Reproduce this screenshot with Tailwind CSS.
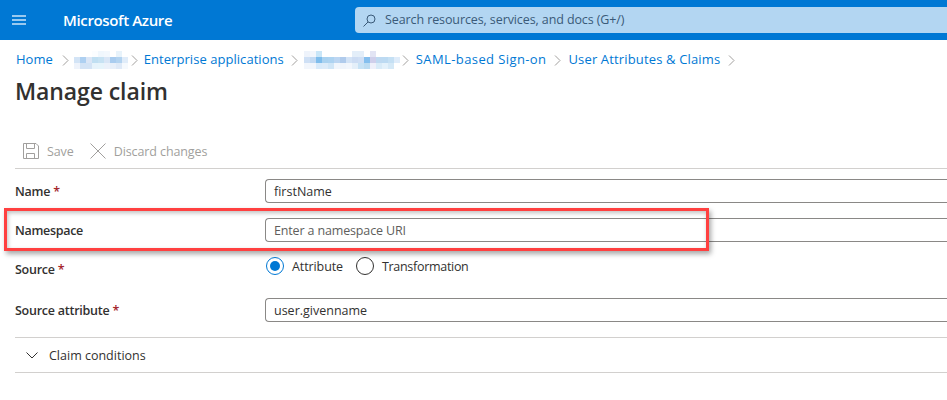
<!DOCTYPE html>
<html lang="en">
<head>
  <meta charset="UTF-8" />
  <title>Manage claim - Microsoft Azure</title>
  <script src="https://cdn.jsdelivr.net/npm/@tailwindcss/browser@4"></script>
</head>
<body class="bg-white h-[400px] w-[947px] overflow-hidden font-['Open_Sans',sans-serif] text-[#323130]">
  <header class="h-10 bg-[#0078d4] flex items-center text-white">
    <svg class="ml-3 w-[14px] h-[10px]" viewBox="0 0 14 10" fill="none" stroke="#99c9ef" stroke-width="2">
      <path d="M0 1h14M0 5h14M0 9h14" />
    </svg>
    <div class="ml-[37px] w-[292px] text-[15px] font-semibold tracking-[-0.35px]">Microsoft Azure</div>
    <div class="w-[592px] h-[26px] bg-[#b3d6f2] rounded-l-sm flex items-center pl-2 text-[12.5px] tracking-[-0.1px] text-[#3a5a78]">
      <svg class="w-[13px] h-[13px] mr-[9px]" viewBox="0 0 13 13" fill="none" stroke="#3a5a78" stroke-width="1">
        <circle cx="8" cy="5" r="4" />
        <path d="M5 8l-4.500 4.500" />
      </svg>
      <span>Search resources, services, and docs (G+/)</span>
    </div>
  </header>

  <main class="pl-[15px]">
    <nav class="h-[35px] pt-[5px] flex items-center text-[13px] text-[#0078d4]">
      <a class="ml-px">Home</a>
      <svg class="w-[7px] h-[11px] ml-[9px] mr-[5px]" viewBox="0 0 7 11" fill="none" stroke="#a19f9d"><path d="M1 .5l5 5-5 5" /></svg>
      <span class="grid grid-cols-[repeat(9,6px)] auto-rows-[6px] w-[54px]">
        <i></i><i></i><i></i><i class="bg-[#fbfdff]"></i><i class="bg-[#f0f7fd]"></i><i class="bg-[#f3f8fd]"></i><i></i><i class="bg-[#e8f3fb]"></i><i></i>
        <i class="bg-[#d3e4f6]"></i><i class="bg-[#aed0f1]"></i><i class="bg-[#dbe6f6]"></i><i class="bg-[#c0dff2]"></i><i class="bg-[#c7e2f3]"></i><i class="bg-[#d9e6f6]"></i><i class="bg-[#a9ccef]"></i><i class="bg-[#b3d3f0]"></i><i class="bg-[#e0ecf9]"></i>
        <i class="bg-[#eef3fb]"></i><i class="bg-[#d3e3f5]"></i><i class="bg-[#d3e3f5]"></i><i class="bg-[#e6f3fb]"></i><i class="bg-[#e6f4fb]"></i><i class="bg-[#ebf1fa]"></i><i class="bg-[#e7eff9]"></i><i class="bg-[#dee9f7]"></i><i class="bg-[#f5f9fd]"></i>
      </span>
      <svg class="w-[7px] h-[11px] ml-[3px] mr-[6px]" viewBox="0 0 7 11" fill="none" stroke="#a19f9d"><path d="M1 .5l5 5-5 5" /></svg>
      <a class="tracking-[0.05px]">Enterprise applications</a>
      <svg class="w-[7px] h-[11px] ml-[7px] mr-[6px]" viewBox="0 0 7 11" fill="none" stroke="#a19f9d"><path d="M1 .5l5 5-5 5" /></svg>
      <span class="grid grid-cols-[repeat(16,6px)] auto-rows-[6px] w-[96px] -mr-[2px]">
        <i class="bg-[#eef3fb]"></i><i class="bg-[#f3f6fc]"></i><i class="bg-[#c9e6f8]"></i><i></i><i></i><i></i><i></i><i></i><i class="bg-[#e3eef9]"></i><i class="bg-[#e3eef9]"></i><i></i><i class="bg-[#e2e4f4]"></i><i></i><i></i><i></i><i></i>
        <i class="bg-[#cfe0f5]"></i><i class="bg-[#c3daf3]"></i><i class="bg-[#7fbdec]"></i><i class="bg-[#aad2f0]"></i><i class="bg-[#add3f1]"></i><i class="bg-[#bcd6f2]"></i><i class="bg-[#b0cbec]"></i><i class="bg-[#d3e3f6]"></i><i class="bg-[#ccdcf3]"></i><i class="bg-[#cfdff5]"></i><i class="bg-[#85bfee]"></i><i class="bg-[#cfcfeb]"></i><i class="bg-[#bed9f1]"></i><i class="bg-[#bcdaf2]"></i><i class="bg-[#c5e0f4]"></i><i class="bg-[#dfecfa]"></i>
        <i class="bg-[#f2f6fc]"></i><i class="bg-[#f2f6fc]"></i><i class="bg-[#d8eafa]"></i><i class="bg-[#dcebf9]"></i><i class="bg-[#d0e6f7]"></i><i class="bg-[#f1f6fc]"></i><i class="bg-[#eff4fb]"></i><i class="bg-[#f2f6fc]"></i><i class="bg-[#e4eff9]"></i><i class="bg-[#c7e2f5]"></i><i class="bg-[#bcdcf2]"></i><i class="bg-[#eef0fa]"></i><i class="bg-[#d8ebf8]"></i><i class="bg-[#e3f1fb]"></i><i class="bg-[#d5e9f7]"></i><i></i>
      </span>
      <svg class="w-[7px] h-[11px] ml-[4px] mr-[7px]" viewBox="0 0 7 11" fill="none" stroke="#a19f9d"><path d="M1 .5l5 5-5 5" /></svg>
      <a class="tracking-[0.4px]">SAML-based Sign-on</a>
      <svg class="w-[7px] h-[11px] ml-[8px] mr-[7px]" viewBox="0 0 7 11" fill="none" stroke="#a19f9d"><path d="M1 .5l5 5-5 5" /></svg>
      <a class="tracking-[0.15px]">User Attributes &amp; Claims</a>
      <svg class="w-[7px] h-[11px] ml-[8px]" viewBox="0 0 7 11" fill="none" stroke="#a19f9d"><path d="M1 .5l5 5-5 5" /></svg>
    </nav>
    <h1 class="h-[32px] text-[23px] leading-[32px] font-semibold tracking-[-0.1px]">Manage claim</h1>

    <div class="mt-[29px] h-[33px] pb-[2px] flex items-center border-b border-[#d2d0ce] text-[12.5px] tracking-[-0.1px] text-[#a19f9d]">
      <svg class="ml-2 w-4 h-4 mr-2" viewBox="0 0 16 16" fill="none" stroke="#a19f9d"><path d="M.5.500h12.500l2.500 2.500v12.500h-15zM3.500.500v5h8v-5M3.500 15.500v-5h8v5" /></svg>
      <span class="pt-[2px]">Save</span>
      <svg class="ml-4 w-4 h-4 mr-2" viewBox="0 0 16 16" fill="none" stroke="#a19f9d"><path d="M.5.500l15 15M15.500.500l-15 15" /></svg>
      <span class="pt-[2px]">Discard changes</span>
    </div>

    <form class="text-[12.5px]">
      <div class="mt-[10px] flex items-center h-6">
        <label class="w-[250px] pt-[2px] font-semibold tracking-[-0.25px]">Name <span class="text-[#a4262c]">*</span></label>
        <div class="flex-1 h-6 border border-[#8a8886] border-r-0 rounded-l-sm pl-2 leading-[24px]">firstName</div>
      </div>
      <div class="mt-[15px] flex items-center h-6">
        <label class="w-[250px] pt-[2px] font-semibold tracking-[-0.3px]">Namespace</label>
        <div class="flex-1 h-6 border border-[#8a8886] border-r-0 rounded-l-sm pl-2 leading-[24px] text-[#605e5c] tracking-[-0.15px]">Enter a namespace URI</div>
      </div>
      <div class="mt-[15px] flex h-[41px]">
        <label class="w-[250px] font-semibold tracking-[-0.25px] pt-[4px]">Source <span class="text-[#a4262c]">*</span></label>
        <div class="flex items-start gap-2 pl-[1px]">
          <span class="w-[18px] h-[18px] rounded-full border border-[#0078d4] flex items-center justify-center"><span class="w-[10px] h-[10px] rounded-full bg-[#0078d4]"></span></span>
          <span class="leading-[20px] mr-[5px] tracking-[-0.1px]">Attribute</span>
          <span class="w-[18px] h-[18px] rounded-full border border-[#323130]"></span>
          <span class="leading-[20px] tracking-[-0.3px]">Transformation</span>
        </div>
      </div>
      <div class="flex items-center h-6">
        <label class="w-[250px] pt-[2px] font-semibold tracking-[-0.25px]">Source attribute <span class="text-[#a4262c]">*</span></label>
        <div class="flex-1 h-6 border border-[#8a8886] border-r-0 rounded-l-sm pl-2 leading-[24px]">user.givenname</div>
      </div>
      <div class="mt-[15px] h-[36px] border-y border-[#d2d0ce] flex items-center pl-[11px]">
        <svg class="w-[12px] h-[7px] mr-[11px]" viewBox="0 0 12 7" fill="none" stroke="#323130"><path d="M.5.500l5.500 5.500 5.500-5.500" /></svg>
        <span class="pt-[2px]">Claim conditions</span>
      </div>
    </form>
  </main>

  <!-- red callout sits over the form -->
  <div class="absolute left-[4px] top-[208px] w-[705px] h-[43px] border-[3px] border-[#ff4040] shadow-[2px_3px_5px_rgba(0,0,0,0.35),inset_1px_2px_4px_rgba(0,0,0,0.25)]"></div>
</body>
</html>
